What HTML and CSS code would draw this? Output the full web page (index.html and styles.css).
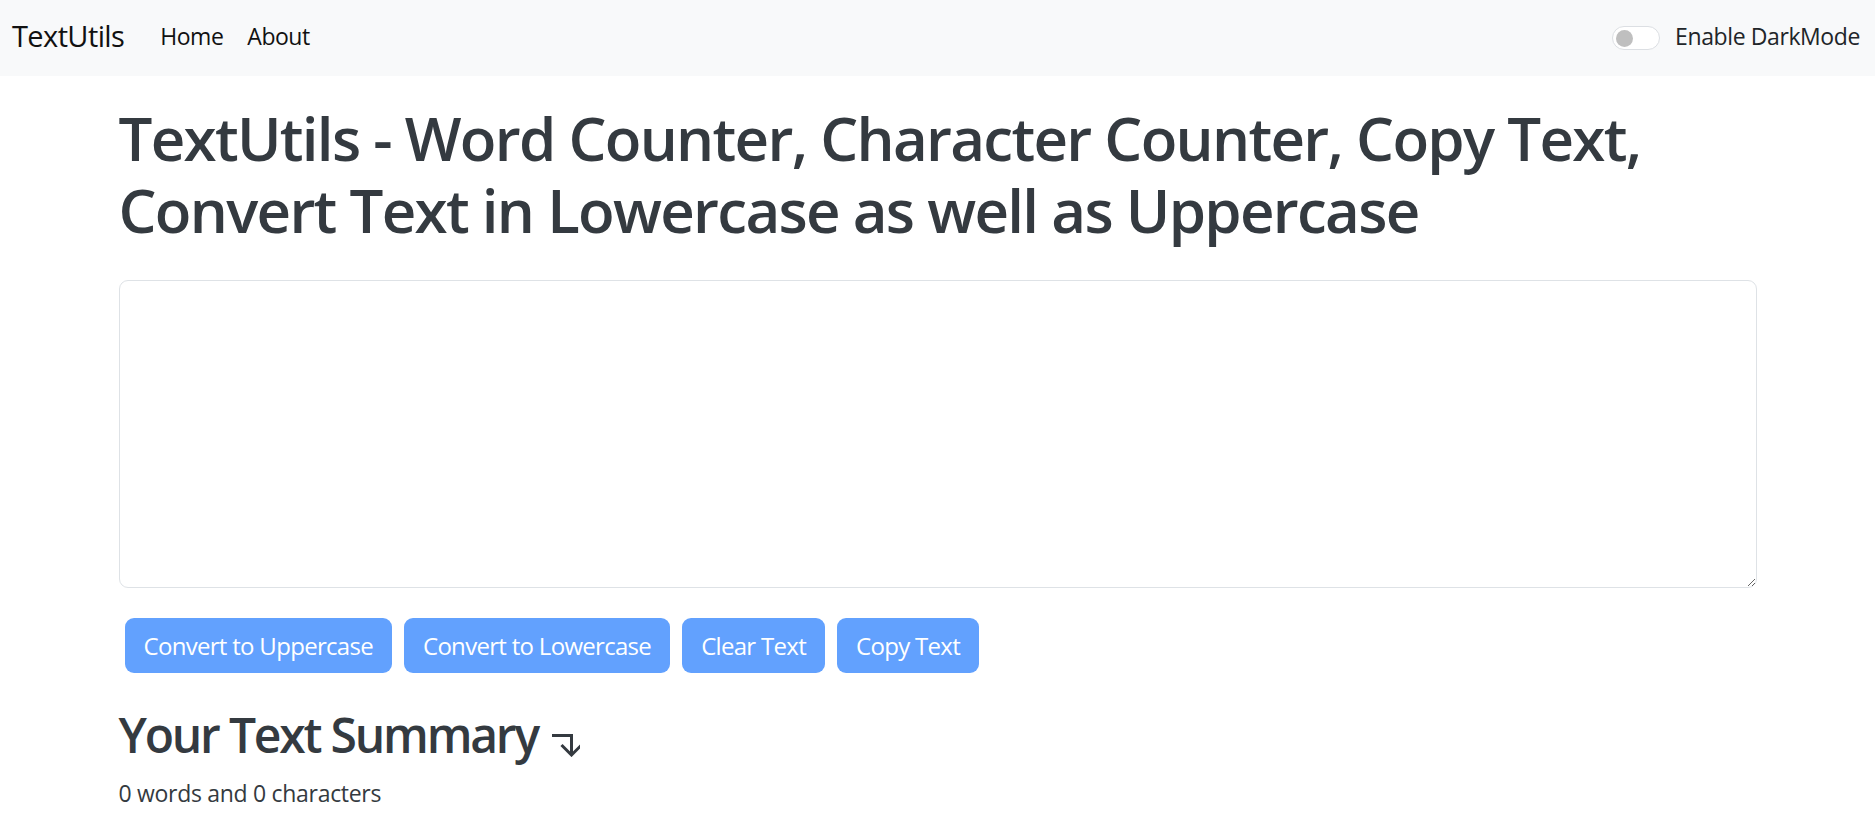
FILE: index.html
```html
<!DOCTYPE html>
<html lang="en">
<head>
<meta charset="utf-8">
<title>TextUtils</title>
<link rel="stylesheet" href="styles.css">
</head>
<body>
<nav class="navbar">
  <a class="brand" href="#">TextUtils</a>
  <ul class="nav-links">
    <li><a href="#">Home</a></li>
    <li><a href="#">About</a></li>
  </ul>
  <label class="switch-wrap">
    <span class="switch"><span class="knob"></span></span>
    <span class="switch-label">Enable DarkMode</span>
  </label>
</nav>
<main class="container">
  <h1 class="title">TextUtils - Word Counter, Character Counter, Copy Text, Convert Text in Lowercase as well as Uppercase</h1>
  <textarea class="text-box" rows="8"></textarea>
  <div class="btn-row">
    <button class="btn" disabled>Convert to Uppercase</button>
    <button class="btn" disabled>Convert to Lowercase</button>
    <button class="btn" disabled>Clear Text</button>
    <button class="btn" disabled>Copy Text</button>
  </div>
  <h2 class="summary">Your Text Summary <svg class="arrow" width="28" height="24" viewBox="0 0 28 24" aria-hidden="true"><path d="M0 2.5H19.5V21" fill="none" stroke="#343a40" stroke-width="3"/><path d="M9.5 12L19.5 22L29.5 12" fill="none" stroke="#343a40" stroke-width="3"/></svg></h2>
  <p class="count">0 words and 0 characters</p>
</main>
</body>
</html>
```
FILE: styles.css
```css
* { box-sizing: border-box; }
html, body { margin: 0; padding: 0; }
body {
  font-family: "Open Sans", "Noto Sans", sans-serif;
  font-size: 24px;
  line-height: 1.5;
  color: #212529;
  background: #fff;
}
.navbar {
  height: 76px;
  background: #f8f9fa;
  display: flex;
  align-items: center;
  padding: 0 15px 4px 12px;
}
.brand {
  font-size: 29px;
  color: #111;
  text-decoration: none;
  margin-right: 36px;
  letter-spacing: -0.6px;
}
.nav-links {
  list-style: none;
  margin: 0;
  padding: 0;
  display: flex;
  gap: 24px;
}
.nav-links a {
  color: #111;
  text-decoration: none;
  font-size: 23px;
  letter-spacing: -0.5px;
}
.switch-wrap {
  margin-left: auto;
  display: flex;
  align-items: center;
  gap: 15px;
}
.switch {
  width: 48px;
  height: 24px;
  border: 1px solid #dcdfe3;
  border-radius: 12px;
  background: #fff;
  display: flex;
  align-items: center;
  padding-left: 3px;
  margin-top: 4px;
}
.knob {
  width: 17px;
  height: 17px;
  border-radius: 50%;
  background: #bfbfbf;
}
.switch-label {
  font-size: 23px;
  color: #212529;
  letter-spacing: -0.4px;
}
.container {
  width: 1638px;
  margin: 0 auto;
}
.title {
  font-size: 60px;
  line-height: 72px;
  font-weight: 600;
  color: #343a40;
  margin: 26px 0 34px;
  letter-spacing: -1.7px;
}
.text-box {
  display: block;
  width: 100%;
  height: 308px;
  border: 1px solid #dee2e6;
  border-radius: 9px;
  padding: 9px 18px;
  font: inherit;
  color: #212529;
  resize: vertical;
  margin: 0;
}
.btn-row {
  display: flex;
  gap: 12px;
  padding-left: 6px;
  margin-top: 30px;
}
.btn {
  height: 55px;
  padding: 0 19px;
  border: none;
  border-radius: 9px;
  background: rgb(98, 161, 254);
  color: #fff;
  font-family: inherit;
  font-size: 24px;
  letter-spacing: -0.7px;
}
.summary {
  font-size: 48px;
  line-height: 57.6px;
  font-weight: 600;
  color: #343a40;
  margin: 33px 0 12px;
  letter-spacing: -2.2px;
}
.arrow {
  vertical-align: -4px;
  margin-left: 4px;
}
.count {
  margin: 0;
  color: #343a40;
  font-size: 23px;
  letter-spacing: -0.3px;
}
```
